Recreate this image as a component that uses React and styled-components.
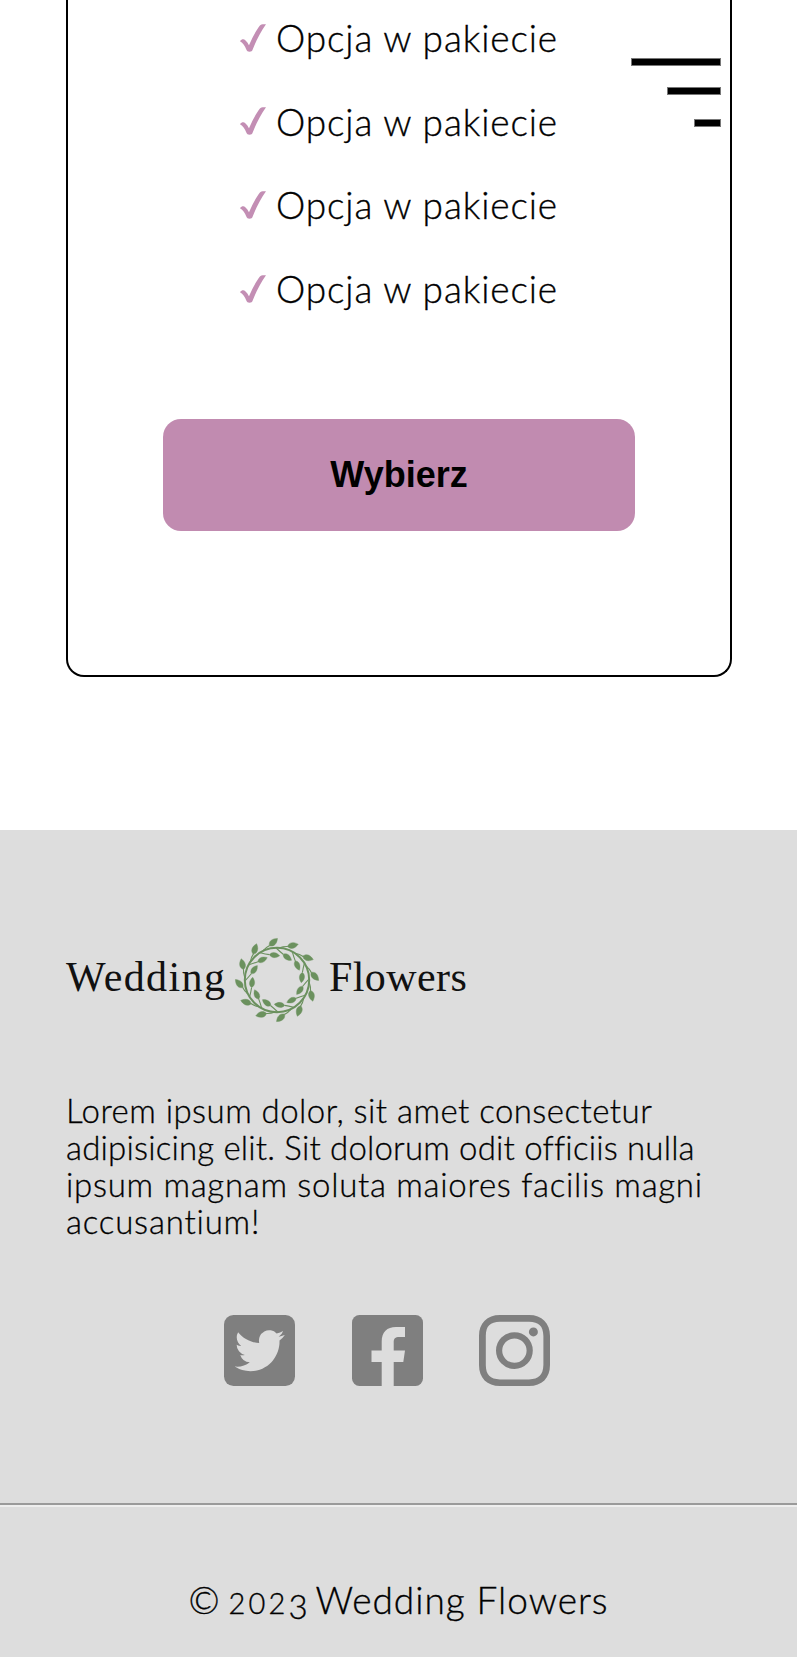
import React from "react";
import styled, { createGlobalStyle } from "styled-components";

const GlobalStyle = createGlobalStyle`
  *, *::before, *::after { box-sizing: border-box; }
  body {
    margin: 0;
    background: #fff;
    color: #000;
    font-family: Lato, "Open Sans", sans-serif;
    font-weight: 300;
  }
`;

const Page = styled.div`
  position: relative;
  height: 1657px;
  overflow: hidden;
  display: flex;
  flex-direction: column;
`;

const Pricing = styled.main`
  height: 830px;
  padding: 0 65px 0 66px;
`;

const PackageCard = styled.section`
  height: 677px;
  border: 2px solid #000;
  border-top: 0;
  border-radius: 0 0 18px 18px;
  display: flex;
  flex-direction: column;
  align-items: center;
`;

const OptionList = styled.ul`
  list-style: none;
  margin: -4px 0 0;
  padding: 0;
`;

const Option = styled.li`
  display: flex;
  align-items: center;
  gap: 10px;
  height: 83.6px;
  line-height: 83.6px;
  font-size: 37px;
  letter-spacing: 0.87px;
  -webkit-text-stroke: 0.35px #000;
`;

const CheckIcon = styled.svg`
  width: 26px;
  height: 28px;
  fill: #c38eb4;
`;

const ChooseButton = styled.button`
  width: 472px;
  height: 112.5px;
  margin-top: 88.5px;
  padding: 0;
  border: 0;
  border-radius: 18px;
  background: #c18bb0;
  color: #000;
  font: bold 36px "Liberation Sans", Arial, sans-serif;
`;

const MenuButton = styled.div`
  position: absolute;
  top: 58px;
  right: 76px;
  display: flex;
  flex-direction: column;
  align-items: flex-end;
`;

const MenuBar = styled.span`
  width: ${(p) => p.$width}px;
  height: ${(p) => p.$height}px;
  margin-bottom: ${(p) => p.$gap}px;
  background: #000;
  border: 0.5px solid #777;
`;

const Footer = styled.footer`
  flex: 1;
  background: #ddd;
  padding-top: 105px;
`;

const FooterBody = styled.div`
  padding: 0 66px;
`;

const Logo = styled.div`
  display: flex;
  align-items: center;
  height: 90px;
  font-family: "Liberation Serif", serif;
  font-weight: 400;
  font-size: 42px;
  line-height: 48px;
  color: #111;
`;

const LogoWord = styled.span`
  width: ${(p) => p.$width}px;
  letter-spacing: ${(p) => p.$spacing}px;
  white-space: nowrap;
  margin-top: -6px;
`;

const WreathIcon = styled.svg`
  width: 90px;
  height: 90px;
  margin-right: 7px;
  flex: none;
  fill: #6b915e;
  stroke: #6b915e;
`;

const Description = styled.p`
  margin: 67px 0 0;
  font-size: 33px;
  line-height: 37px;
  -webkit-text-stroke: 0.3px #000;
`;

const Line = styled.span`
  display: block;
  white-space: nowrap;
  letter-spacing: ${(p) => p.$spacing}px;
`;

const Socials = styled.div`
  display: flex;
  gap: 56.5px;
  padding-left: 158px;
  margin-top: 75px;
`;

const SocialIcon = styled.svg`
  width: 71px;
  height: 71px;
  fill: #7f7f7f;
`;

const Divider = styled.hr`
  margin: 117px 0 71px;
  border: 0;
  border-top: 2px solid #9a9a9a;
  border-bottom: 2px solid #eee;
`;

const Copyright = styled.p`
  display: flex;
  margin: 0;
  padding-left: 188.5px;
  height: 43px;
  font-size: 37px;
  line-height: 43px;
  white-space: pre;
  -webkit-text-stroke: 0.35px #000;
`;

const CopyrightSign = styled.span`
  width: 40px;
`;

const Year = styled.span`
  width: 87px;
`;

const Digit = styled.span`
  font-size: ${(p) => (p.$low ? 33 : 29)}px;
  letter-spacing: ${(p) => (p.$low ? 0 : 3.2)}px;
  vertical-align: ${(p) => (p.$low ? -5 : 0)}px;
  line-height: 1;
`;

const Brand = styled.span`
  letter-spacing: 0.97px;
`;

const STEPS = Array.from({ length: 12 }, (_, i) => i * 30 - 5.5);

function Check() {
  return (
    <CheckIcon viewBox="0 0 26 28">
      <path d="M0 17.2C1.5 15.2 3.8 14.8 5.3 16.2C7 17.7 8 19.3 9 21.3C12.500 13.500 16 6.500 19.700 1.700C21 0.200 23 0 26 0.300C20.500 8.200 16.300 16.500 12.800 25.300C12.200 27.200 11.200 27.700 9.500 27.700C7.800 27.700 7 27.200 6.300 25.500C5 22 3 19 0 17.2Z" />
    </CheckIcon>
  );
}

function Wreath() {
  return (
    <WreathIcon viewBox="-45 -45 90 90">
      <circle r="32.200" fill="none" strokeWidth="2" />
      {STEPS.map((a) => (
        <g key={a} transform={`rotate(${a})`}>
          <path d="M30.500 -11Q33.500 -8 35 -4" fill="none" strokeWidth="1.100" />
          <path d="M28.800 -14Q27 -9 26 -5" fill="none" strokeWidth="1.100" />
          <path
            d="M-5.400 0C-3 -4 1.500 -3.600 5.600 0C1.500 3.600 -3 4 -5.400 0Z"
            transform="translate(38 0) rotate(53)"
            strokeWidth="0.400"
          />
          <path
            d="M-5.200 0C-3 -3.600 1.500 -3.300 5.200 0C1.500 3.300 -3 3.600 -5.200 0Z"
            transform="translate(25 0) rotate(102)"
            strokeWidth="0.300"
          />
        </g>
      ))}
    </WreathIcon>
  );
}

function Twitter() {
  return (
    <SocialIcon viewBox="0 0 71 71">
      <rect width="71" height="71" rx="9.500" />
      <path
        fill="#ddd"
        transform="translate(10.700 10.500) scale(2.080 2.100)"
        d="M23.953 4.57a10 10 0 01-2.825.775 4.958 4.958 0 002.163-2.723c-.951.555-2.005.959-3.127 1.184a4.92 4.92 0 00-8.384 4.482C7.69 8.095 4.067 6.13 1.64 3.162a4.822 4.822 0 00-.666 2.475c0 1.71.87 3.213 2.188 4.096a4.904 4.904 0 01-2.228-.616v.06a4.923 4.923 0 003.946 4.827 4.996 4.996 0 01-2.212.085 4.936 4.936 0 004.604 3.417 9.867 9.867 0 01-6.102 2.105c-.39 0-.779-.023-1.17-.067a13.995 13.995 0 007.557 2.209c9.053 0 13.998-7.496 13.998-13.985 0-.21 0-.42-.015-.63A9.935 9.935 0 0024 4.59z"
      />
    </SocialIcon>
  );
}

function Facebook() {
  return (
    <SocialIcon viewBox="0 0 71 71">
      <rect width="71" height="71" rx="7.500" />
      <path
        fill="#ddd"
        d="M29.700 71V47H19.500V35.500H29.700V26.500C29.700 17 35 12 44 12H53V22H47.500C43 22 41.700 23.500 41.700 27.500V35.500H53L51.300 47H41.700V71Z"
      />
    </SocialIcon>
  );
}

function Instagram() {
  return (
    <SocialIcon viewBox="0 0 71 71">
      <path
        fillRule="evenodd"
        d="M21 0H50C63 0 71 8 71 21V50C71 63 63 71 50 71H21C8 71 0 63 0 50V21C0 8 8 0 21 0ZM21 6.800C11 7 7 11 6.800 21V50C7 60 11 64 21 64.400H50C60 64 64 60 64.400 50V21C64 11 60 7 50 6.800Z"
      />
      <circle cx="35.400" cy="35.600" r="15.300" fill="none" stroke="#7f7f7f" strokeWidth="6.200" />
      <circle cx="54.400" cy="16.900" r="4.500" />
    </SocialIcon>
  );
}

const OPTIONS = [1, 2, 3, 4];

const DESCRIPTION = [
  ["Lorem ipsum dolor, sit amet consectetur", 0.45],
  ["adipisicing elit. Sit dolorum odit officiis nulla", 0.18],
  ["ipsum magnam soluta maiores facilis magni", 0.7],
  ["accusantium!", 0.8],
];

export default function App() {
  return (
    <Page>
      <GlobalStyle />
      <Pricing>
        <PackageCard>
          <OptionList>
            {OPTIONS.map((id) => (
              <Option key={id}>
                <Check />
                Opcja w pakiecie
              </Option>
            ))}
          </OptionList>
          <ChooseButton>Wybierz</ChooseButton>
        </PackageCard>
      </Pricing>
      <MenuButton>
        <MenuBar $width={90.5} $height={8} $gap={21} />
        <MenuBar $width={54.5} $height={8} $gap={24} />
        <MenuBar $width={27.5} $height={8} $gap={0} />
      </MenuButton>
      <Footer>
        <FooterBody>
          <Logo>
            <LogoWord $width={166} $spacing={1.4}>Wedding</LogoWord>
            <Wreath />
            <LogoWord $width={140} $spacing={0.4}>Flowers</LogoWord>
          </Logo>
          <Description>
            {DESCRIPTION.map(([text, spacing]) => (
              <Line key={text} $spacing={spacing}>{text}</Line>
            ))}
          </Description>
          <Socials>
            <Twitter />
            <Facebook />
            <Instagram />
          </Socials>
        </FooterBody>
        <Divider />
        <Copyright>
          <CopyrightSign>©</CopyrightSign>
          <Year>
            <Digit>202</Digit>
            <Digit $low>3</Digit>
          </Year>
          <Brand>Wedding Flowers</Brand>
        </Copyright>
      </Footer>
    </Page>
  );
}
